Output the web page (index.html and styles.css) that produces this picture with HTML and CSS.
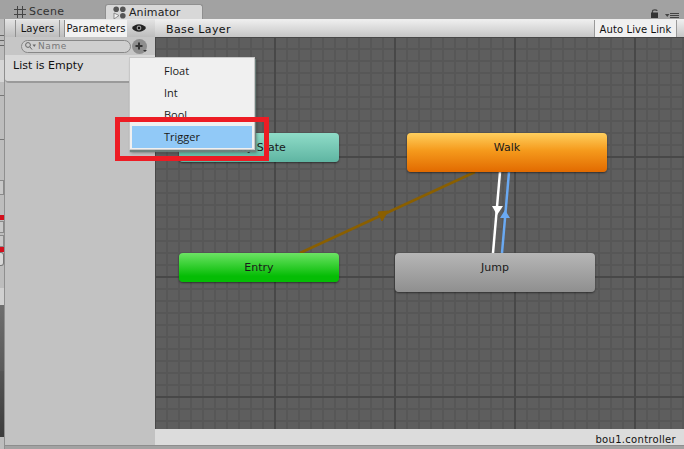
FILE: index.html
```html
<!DOCTYPE html>
<html lang="en">
<head>
    <meta charset="UTF-8">
    <title>Animator</title>
    <link rel="stylesheet" href="styles.css">
</head>
<body>
    <div class="screen">
        <div class="tabbar">
            <div class="tab">
                <svg class="tab-icon" width="12" height="12" viewBox="0 0 12 12"><path d="M3.500 0V12M8.500 0V12M0 3.500H12M0 8.500H12" stroke="#444" stroke-width="1" fill="none"/></svg>
                <span>Scene</span>
            </div>
            <div class="tab tab-active">
                <svg class="tab-icon" width="13" height="13" viewBox="0 0 13 13"><circle cx="3.200" cy="3.200" r="2.800" fill="#555"/><circle cx="9.800" cy="3.200" r="2.800" fill="#555"/><circle cx="9.800" cy="9.800" r="2.800" fill="#555"/><path d="M1 7L6 9.500L1 13Z" fill="#f4f4f4" stroke="#777" stroke-width=".8"/></svg>
                <span>Animator</span>
            </div>
            <div class="tab-tools">
                <svg width="8" height="9" viewBox="0 0 8 9"><path d="M1.500 4V2C1.500 .4 6 .4 6 2" stroke="#444" stroke-width="1.200" fill="none"/><rect x="0" y="3.500" width="7" height="5.500" fill="#333"/></svg>
                <svg width="14" height="5" viewBox="0 0 14 5"><path d="M0 1H4.500L2.250 4Z" fill="#444"/><path d="M5 .5H14M5 2.500H14M5 4.500H14" stroke="#444" stroke-width="1"/></svg>
            </div>
        </div>
        <div class="workspace">
            <div class="strip">
                <div class="strip-lines"></div>
                <div class="strip-box"></div>
                <div class="strip-red strip-red-first"></div>
                <div class="strip-box strip-box-small"></div>
                <div class="strip-box strip-box-small"></div>
                <div class="strip-red"></div>
                <div class="strip-btn"></div>
                <div class="strip-dark"></div>
            </div>
            <div class="window">
                <div class="side">
                    <div class="side-tabs">
                        <div class="side-tab">Layers</div>
                        <div class="side-tab side-tab-on">Parameters</div>
                        <svg class="eye" width="14" height="10" viewBox="0 0 14 10"><path d="M0 5C3 0 11 0 14 5C11 10 3 10 0 5Z" fill="#222"/><circle cx="7" cy="5" r="2.400" fill="#999"/><circle cx="7" cy="5" r="1.200" fill="#111"/></svg>
                    </div>
                    <div class="search-row">
                        <div class="search">
                            <svg width="11" height="8" viewBox="0 0 11 8"><circle cx="3" cy="3" r="2.400" stroke="#666" fill="none"/><path d="M5 5L7 7.500" stroke="#666"/><path d="M7.500 2.500H11L9.250 5Z" fill="#666"/></svg>
                            <span>Name</span>
                        </div>
                        <div class="add-btn">
                            <svg width="15" height="15" viewBox="0 0 15 15"><path d="M7 3.500V10.500M3.500 7H10.500" stroke="#333" stroke-width="2"/><path d="M11 11H15L13 13Z" fill="#333"/></svg>
                        </div>
                    </div>
                    <div class="list-card">List is Empty</div>
                </div>
                <div class="graph-col">
                    <div class="toolbar">
                        <div class="crumb">Base Layer</div>
                        <div class="live-btn">Auto Live Link</div>
                    </div>
                    <div class="graph">
                        <svg class="wires" width="529" height="392" viewBox="0 0 529 392">
                            <path d="M145 216L320 135" stroke="#8a5f00" stroke-width="2.500"/>
                            <path d="M223 175L233 174L227 184Z" fill="#8a5f00" stroke="#8a5f00"/>
                            <path d="M345 135L338 216" stroke="#fff" stroke-width="2.500"/>
                            <path d="M337 169H348L342 178Z" fill="#fff"/>
                            <path d="M354 135L347 216" stroke="#6aa9f2" stroke-width="2.500"/>
                            <path d="M350 173L355 181H345Z" fill="#6aa9f2"/>
                        </svg>
                        <div class="node node-any">Any State</div>
                        <div class="node node-walk">Walk</div>
                        <div class="node node-entry">Entry</div>
                        <div class="node node-jump">Jump</div>
                    </div>
                    <div class="status">bou1.controller</div>
                </div>
            </div>
        </div>

        <div class="menu">
            <div class="menu-item">Float</div>
            <div class="menu-item">Int</div>
            <div class="menu-item">Bool</div>
            <div class="menu-item menu-item-on">Trigger</div>
        </div>
        <div class="callout"></div>
    </div>
</body>
</html>
```

FILE: styles.css
```css
* {
    box-sizing: border-box;
}
body {
    margin: 0;
    font-family: "DejaVu Sans", sans-serif;
    color: #111;
}
.screen {
    position: relative;
    width: 684px;
    height: 449px;
    overflow: hidden;
    display: flex;
    flex-direction: column;
    background: #a2a2a2;
}

/* top tabs */
.tabbar {
    height: 19px;
    flex: none;
    display: flex;
    align-items: flex-end;
    padding-left: 14px;
}
.tab {
    height: 15px;
    display: flex;
    align-items: center;
    gap: 3px;
    font-size: 11px;
    letter-spacing: .4px;
    line-height: 17px;
    color: #333;
    width: 91px;
}
.tab-active {
    width: 98px;
    padding-left: 7px;
    background: #d8d8d8;
    border: 1px solid #8f8f8f;
    border-bottom: 0;
    border-radius: 3px 3px 0 0;
    color: #222;
    letter-spacing: .1px;
}
.tab-tools {
    margin-left: auto;
    margin-right: 5px;
    padding-bottom: 1px;
    display: flex;
    align-items: flex-end;
    gap: 6px;
}
.workspace {
    flex: 1;
    display: flex;
    min-height: 0;
}

/* bits of the window behind, on the left edge */
.strip {
    width: 5px;
    flex: none;
    display: flex;
    flex-direction: column;
    background: #bdbdbd;
    border-right: 1px solid #8f8f8f;
}
.strip-lines {
    height: 161px;
    flex: none;
    background: linear-gradient(#bdbdbd 16px, #666 16px, #666 17px, #bdbdbd 17px, #bdbdbd 21px, #666 21px, #666 22px, #bdbdbd 22px, #bdbdbd 26px, #666 26px, #666 27px, #bdbdbd 27px, #bdbdbd 41px, #d6d6d6 41px, #d6d6d6 63px, #bdbdbd 63px, #bdbdbd 76px, #777 76px, #777 77px, #bdbdbd 77px, #bdbdbd 120px, #777 120px, #777 121px, #bdbdbd 121px);
}
.strip-box {
    height: 15px;
    flex: none;
    background: #c8c8c8;
    border: 1px solid #8a8a8a;
    border-left: 0;
}
.strip-box-small {
    height: 12px;
}
.strip-box-small + .strip-box-small {
    margin-top: 2px;
}
.strip-red {
    height: 5px;
    flex: none;
    background: #d40f1c;
}
.strip-red-first {
    margin: 20px 0 1px;
}
.strip-btn {
    height: 14px;
    flex: none;
    background: #d8d8d8;
    border: 1px solid #777;
    border-left: 0;
    border-radius: 0 3px 3px 0;
}
.strip-dark {
    margin-top: 22px;
    height: 149px;
    flex: none;
    background: linear-gradient(#d0d0d0 0, #d0d0d0 11.4%, #6e6e6e 11.5%, #5a5a5a 55.6%, #555 55.7%, #3c3c3c 100%);
}

.window {
    flex: 1;
    display: flex;
    height: 427px;
    background: #c2c2c2;
    border-bottom: 1px solid #8d8d8d;
    min-width: 0;
}

/* parameters panel */
.side {
    width: 150px;
    flex: none;
}
.side-tabs {
    height: 18px;
    display: flex;
    align-items: stretch;
    background: linear-gradient(#e2e2e2, #bdbdbd);
    border-top: 1px solid #e8e8e8;
    padding-left: 10px;
    gap: 4px;
}
.side-tab {
    font-size: 10px;
    letter-spacing: .1px;
    line-height: 18px;
    border-left: 1px solid #909090;
    border-right: 1px solid #909090;
    width: 45px;
    text-align: center;
}
.side-tab-on {
    width: 63px;
    background: #f2f2f2;
    border-right: 0;
    letter-spacing: .2px;
}
.eye {
    margin: 3px 0 0 1px;
}
.search-row {
    height: 18px;
    display: flex;
    align-items: center;
    padding-left: 16px;
    background: #c6c6c6;
    gap: 1px;
}
.search {
    width: 110px;
    height: 13px;
    border: 1px solid #888;
    border-radius: 7px;
    background: #cfcfcf;
    display: flex;
    align-items: center;
    gap: 2px;
    padding-left: 3px;
    font-size: 9px;
    letter-spacing: .6px;
    color: #777;
}
.add-btn {
    width: 15px;
    height: 15px;
    border-radius: 50%;
    background: #8e8e8e;
}
.list-card {
    height: 28px;
    font-size: 11px;
    padding: 4px 0 0 8px;
    background: #d9d9d9;
    border-bottom: 2px solid #9a9a9a;
    border-radius: 0 0 4px 4px;
}

/* graph */
.graph-col {
    flex: 1;
    display: flex;
    flex-direction: column;
    min-width: 0;
}
.toolbar {
    height: 18px;
    flex: none;
    display: flex;
    justify-content: space-between;
    padding-right: 7px;
    background: linear-gradient(#eeeeee, #c6c6c6);
    border-top: 1px solid #eee;
}
.crumb {
    padding: 0 11px;
    font-size: 11px;
    letter-spacing: .4px;
    line-height: 19px;
}
.live-btn {
    width: 83px;
    text-align: center;
    font-size: 10px;
    letter-spacing: .1px;
    line-height: 19px;
    background: #f0f0f0;
    border-left: 1px solid #999;
    border-right: 1px solid #999;
}
.graph {
    position: relative;
    flex: 1;
    min-height: 0;
    background-color: #5e5e5e;
    background-image:
        linear-gradient(90deg, #484848 2px, transparent 2px),
        linear-gradient(#484848 2px, transparent 2px),
        linear-gradient(90deg, #575757 2px, transparent 2px),
        linear-gradient(#575757 2px, transparent 2px);
    background-size: 120px 120px, 120px 120px, 12px 12px, 12px 12px;
    background-position: -1px -1px;
}
.wires {
    position: absolute;
    left: 0;
    top: 0;
}
.node {
    position: absolute;
    border-radius: 4px;
    text-align: center;
    font-size: 11px;
    line-height: 29px;
    color: #1a1a1a;
    box-shadow: 0 1px 2px rgba(0, 0, 0, .5);
}
.node-any {
    left: 24px;
    top: 96px;
    width: 160px;
    height: 29px;
    background: linear-gradient(#8fdcc8, #5fb5a2);
}
.node-walk {
    left: 252px;
    top: 96px;
    width: 200px;
    height: 39px;
    background: linear-gradient(#ffcf5e 0, #f59a1c 45%, #e26a00 100%);
}
.node-entry {
    left: 24px;
    top: 216px;
    width: 160px;
    height: 29px;
    background: linear-gradient(#6ce364, #05bd05 80%);
}
.node-jump {
    left: 240px;
    top: 216px;
    width: 200px;
    height: 39px;
    background: linear-gradient(#b6b6b6, #8f8f8f);
}
.status {
    height: 16px;
    flex: none;
    text-align: right;
    padding: 5px 8px 0 0;
    font-size: 10px;
    letter-spacing: .3px;
    line-height: 12px;
    background: #dcdcdc;
}

/* popup menu, sits over panel and graph */
.menu {
    position: absolute;
    left: 129px;
    top: 57px;
    width: 126px;
    height: 93px;
    padding: 2px 2px 0;
    background: #f0f0f0;
    border: 1px solid #c8c8c8;
    box-shadow: 1px 2px 1px rgba(110, 130, 125, .9), 2px 3px 3px rgba(0, 0, 0, .3);
    font-family: "Open Sans", sans-serif;
    font-size: 11px;
}
.menu-item {
    height: 22px;
    line-height: 22px;
    padding-left: 32px;
    color: #1a1a1a;
}
.menu-item-on {
    background: #91c9f7;
}
.callout {
    position: absolute;
    left: 115px;
    top: 117px;
    width: 154px;
    height: 44px;
    border: 5px solid #ed1c24;
}
```
